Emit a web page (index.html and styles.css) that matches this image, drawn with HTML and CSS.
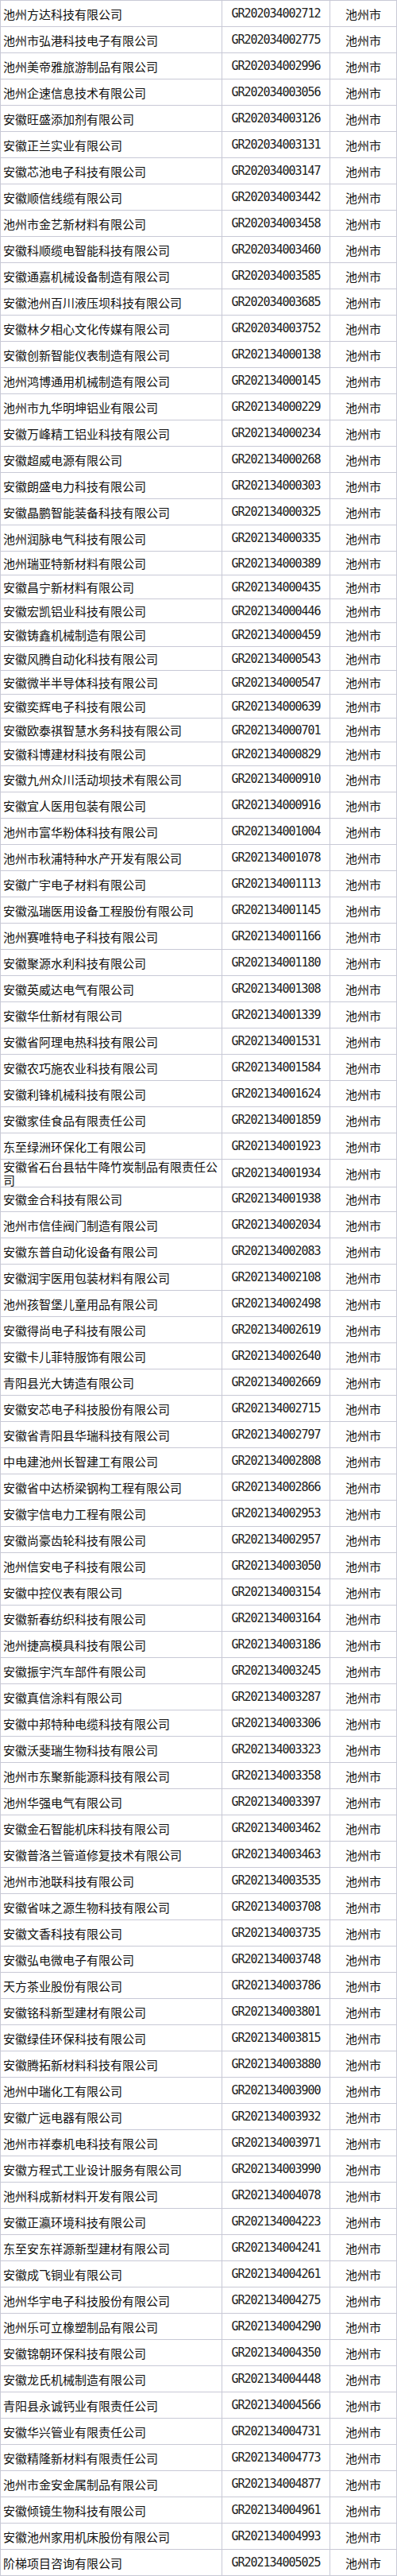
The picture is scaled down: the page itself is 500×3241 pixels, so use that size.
FILE: index.html
```html
<!DOCTYPE html>
<html lang="zh-CN">
<head>
<meta charset="utf-8">
<title>池州市高新技术企业名单</title>
<link rel="stylesheet" href="styles.css">
</head>
<body>
<div class="sheet">
<div class="row"><div class="cell name">池州方达科技有限公司</div><div class="cell code">GR202034002712</div><div class="cell city">池州市</div></div>
<div class="row"><div class="cell name">池州市弘港科技电子有限公司</div><div class="cell code">GR202034002775</div><div class="cell city">池州市</div></div>
<div class="row"><div class="cell name">池州美帝雅旅游制品有限公司</div><div class="cell code">GR202034002996</div><div class="cell city">池州市</div></div>
<div class="row"><div class="cell name">池州企速信息技术有限公司</div><div class="cell code">GR202034003056</div><div class="cell city">池州市</div></div>
<div class="row"><div class="cell name">安徽旺盛添加剂有限公司</div><div class="cell code">GR202034003126</div><div class="cell city">池州市</div></div>
<div class="row"><div class="cell name">安徽正兰实业有限公司</div><div class="cell code">GR202034003131</div><div class="cell city">池州市</div></div>
<div class="row"><div class="cell name">安徽芯池电子科技有限公司</div><div class="cell code">GR202034003147</div><div class="cell city">池州市</div></div>
<div class="row"><div class="cell name">安徽顺信线缆有限公司</div><div class="cell code">GR202034003442</div><div class="cell city">池州市</div></div>
<div class="row"><div class="cell name">池州市金艺新材料有限公司</div><div class="cell code">GR202034003458</div><div class="cell city">池州市</div></div>
<div class="row"><div class="cell name">安徽科顺缆电智能科技有限公司</div><div class="cell code">GR202034003460</div><div class="cell city">池州市</div></div>
<div class="row"><div class="cell name">安徽通嘉机械设备制造有限公司</div><div class="cell code">GR202034003585</div><div class="cell city">池州市</div></div>
<div class="row"><div class="cell name">安徽池州百川液压坝科技有限公司</div><div class="cell code">GR202034003685</div><div class="cell city">池州市</div></div>
<div class="row"><div class="cell name">安徽林夕相心文化传媒有限公司</div><div class="cell code">GR202034003752</div><div class="cell city">池州市</div></div>
<div class="row"><div class="cell name">安徽创新智能仪表制造有限公司</div><div class="cell code">GR202134000138</div><div class="cell city">池州市</div></div>
<div class="row"><div class="cell name">池州鸿博通用机械制造有限公司</div><div class="cell code">GR202134000145</div><div class="cell city">池州市</div></div>
<div class="row"><div class="cell name">池州市九华明坤铝业有限公司</div><div class="cell code">GR202134000229</div><div class="cell city">池州市</div></div>
<div class="row"><div class="cell name">安徽万峰精工铝业科技有限公司</div><div class="cell code">GR202134000234</div><div class="cell city">池州市</div></div>
<div class="row"><div class="cell name">安徽超威电源有限公司</div><div class="cell code">GR202134000268</div><div class="cell city">池州市</div></div>
<div class="row"><div class="cell name">安徽朗盛电力科技有限公司</div><div class="cell code">GR202134000303</div><div class="cell city">池州市</div></div>
<div class="row"><div class="cell name">安徽晶鹏智能装备科技有限公司</div><div class="cell code">GR202134000325</div><div class="cell city">池州市</div></div>
<div class="row"><div class="cell name">池州润脉电气科技有限公司</div><div class="cell code">GR202134000335</div><div class="cell city">池州市</div></div>
<div class="row short"><div class="cell name">池州瑞亚特新材料有限公司</div><div class="cell code">GR202134000389</div><div class="cell city">池州市</div></div>
<div class="row short"><div class="cell name">安徽昌宁新材料有限公司</div><div class="cell code">GR202134000435</div><div class="cell city">池州市</div></div>
<div class="row short"><div class="cell name">安徽宏凯铝业科技有限公司</div><div class="cell code">GR202134000446</div><div class="cell city">池州市</div></div>
<div class="row short"><div class="cell name">安徽铸鑫机械制造有限公司</div><div class="cell code">GR202134000459</div><div class="cell city">池州市</div></div>
<div class="row short"><div class="cell name">安徽风腾自动化科技有限公司</div><div class="cell code">GR202134000543</div><div class="cell city">池州市</div></div>
<div class="row short"><div class="cell name">安徽微半半导体科技有限公司</div><div class="cell code">GR202134000547</div><div class="cell city">池州市</div></div>
<div class="row short"><div class="cell name">安徽奕辉电子科技有限公司</div><div class="cell code">GR202134000639</div><div class="cell city">池州市</div></div>
<div class="row short"><div class="cell name">安徽欧泰祺智慧水务科技有限公司</div><div class="cell code">GR202134000701</div><div class="cell city">池州市</div></div>
<div class="row short"><div class="cell name">安徽科博建材科技有限公司</div><div class="cell code">GR202134000829</div><div class="cell city">池州市</div></div>
<div class="row"><div class="cell name">安徽九州众川活动坝技术有限公司</div><div class="cell code">GR202134000910</div><div class="cell city">池州市</div></div>
<div class="row"><div class="cell name">安徽宜人医用包装有限公司</div><div class="cell code">GR202134000916</div><div class="cell city">池州市</div></div>
<div class="row"><div class="cell name">池州市富华粉体科技有限公司</div><div class="cell code">GR202134001004</div><div class="cell city">池州市</div></div>
<div class="row"><div class="cell name">池州市秋浦特种水产开发有限公司</div><div class="cell code">GR202134001078</div><div class="cell city">池州市</div></div>
<div class="row"><div class="cell name">安徽广宇电子材料有限公司</div><div class="cell code">GR202134001113</div><div class="cell city">池州市</div></div>
<div class="row"><div class="cell name">安徽泓瑞医用设备工程股份有限公司</div><div class="cell code">GR202134001145</div><div class="cell city">池州市</div></div>
<div class="row"><div class="cell name">池州赛唯特电子科技有限公司</div><div class="cell code">GR202134001166</div><div class="cell city">池州市</div></div>
<div class="row"><div class="cell name">安徽聚源水利科技有限公司</div><div class="cell code">GR202134001180</div><div class="cell city">池州市</div></div>
<div class="row"><div class="cell name">安徽英威达电气有限公司</div><div class="cell code">GR202134001308</div><div class="cell city">池州市</div></div>
<div class="row"><div class="cell name">安徽华仕新材有限公司</div><div class="cell code">GR202134001339</div><div class="cell city">池州市</div></div>
<div class="row"><div class="cell name">安徽省阿理电热科技有限公司</div><div class="cell code">GR202134001531</div><div class="cell city">池州市</div></div>
<div class="row"><div class="cell name">安徽农巧施农业科技有限公司</div><div class="cell code">GR202134001584</div><div class="cell city">池州市</div></div>
<div class="row"><div class="cell name">安徽利锋机械科技有限公司</div><div class="cell code">GR202134001624</div><div class="cell city">池州市</div></div>
<div class="row"><div class="cell name">安徽家佳食品有限责任公司</div><div class="cell code">GR202134001859</div><div class="cell city">池州市</div></div>
<div class="row"><div class="cell name">东至绿洲环保化工有限公司</div><div class="cell code">GR202134001923</div><div class="cell city">池州市</div></div>
<div class="row"><div class="cell name">安徽省石台县牯牛降竹炭制品有限责任公司</div><div class="cell code">GR202134001934</div><div class="cell city">池州市</div></div>
<div class="row"><div class="cell name">安徽金合科技有限公司</div><div class="cell code">GR202134001938</div><div class="cell city">池州市</div></div>
<div class="row"><div class="cell name">池州市信佳阀门制造有限公司</div><div class="cell code">GR202134002034</div><div class="cell city">池州市</div></div>
<div class="row"><div class="cell name">安徽东普自动化设备有限公司</div><div class="cell code">GR202134002083</div><div class="cell city">池州市</div></div>
<div class="row"><div class="cell name">安徽润宇医用包装材料有限公司</div><div class="cell code">GR202134002108</div><div class="cell city">池州市</div></div>
<div class="row"><div class="cell name">池州孩智堡儿童用品有限公司</div><div class="cell code">GR202134002498</div><div class="cell city">池州市</div></div>
<div class="row"><div class="cell name">安徽得尚电子科技有限公司</div><div class="cell code">GR202134002619</div><div class="cell city">池州市</div></div>
<div class="row"><div class="cell name">安徽卡儿菲特服饰有限公司</div><div class="cell code">GR202134002640</div><div class="cell city">池州市</div></div>
<div class="row"><div class="cell name">青阳县光大铸造有限公司</div><div class="cell code">GR202134002669</div><div class="cell city">池州市</div></div>
<div class="row"><div class="cell name">安徽安芯电子科技股份有限公司</div><div class="cell code">GR202134002715</div><div class="cell city">池州市</div></div>
<div class="row"><div class="cell name">安徽省青阳县华瑞科技有限公司</div><div class="cell code">GR202134002797</div><div class="cell city">池州市</div></div>
<div class="row"><div class="cell name">中电建池州长智建工有限公司</div><div class="cell code">GR202134002808</div><div class="cell city">池州市</div></div>
<div class="row"><div class="cell name">安徽省中达桥梁钢构工程有限公司</div><div class="cell code">GR202134002866</div><div class="cell city">池州市</div></div>
<div class="row"><div class="cell name">安徽宇信电力工程有限公司</div><div class="cell code">GR202134002953</div><div class="cell city">池州市</div></div>
<div class="row"><div class="cell name">安徽尚豪齿轮科技有限公司</div><div class="cell code">GR202134002957</div><div class="cell city">池州市</div></div>
<div class="row"><div class="cell name">池州信安电子科技有限公司</div><div class="cell code">GR202134003050</div><div class="cell city">池州市</div></div>
<div class="row"><div class="cell name">安徽中控仪表有限公司</div><div class="cell code">GR202134003154</div><div class="cell city">池州市</div></div>
<div class="row"><div class="cell name">安徽新春纺织科技有限公司</div><div class="cell code">GR202134003164</div><div class="cell city">池州市</div></div>
<div class="row"><div class="cell name">池州捷高模具科技有限公司</div><div class="cell code">GR202134003186</div><div class="cell city">池州市</div></div>
<div class="row"><div class="cell name">安徽振宇汽车部件有限公司</div><div class="cell code">GR202134003245</div><div class="cell city">池州市</div></div>
<div class="row"><div class="cell name">安徽真信涂料有限公司</div><div class="cell code">GR202134003287</div><div class="cell city">池州市</div></div>
<div class="row"><div class="cell name">安徽中邦特种电缆科技有限公司</div><div class="cell code">GR202134003306</div><div class="cell city">池州市</div></div>
<div class="row"><div class="cell name">安徽沃斐瑞生物科技有限公司</div><div class="cell code">GR202134003323</div><div class="cell city">池州市</div></div>
<div class="row"><div class="cell name">池州市东聚新能源科技有限公司</div><div class="cell code">GR202134003358</div><div class="cell city">池州市</div></div>
<div class="row"><div class="cell name">池州华强电气有限公司</div><div class="cell code">GR202134003397</div><div class="cell city">池州市</div></div>
<div class="row"><div class="cell name">安徽金石智能机床科技有限公司</div><div class="cell code">GR202134003462</div><div class="cell city">池州市</div></div>
<div class="row"><div class="cell name">安徽普洛兰管道修复技术有限公司</div><div class="cell code">GR202134003463</div><div class="cell city">池州市</div></div>
<div class="row"><div class="cell name">池州市池联科技有限公司</div><div class="cell code">GR202134003535</div><div class="cell city">池州市</div></div>
<div class="row"><div class="cell name">安徽省味之源生物科技有限公司</div><div class="cell code">GR202134003708</div><div class="cell city">池州市</div></div>
<div class="row"><div class="cell name">安徽文香科技有限公司</div><div class="cell code">GR202134003735</div><div class="cell city">池州市</div></div>
<div class="row"><div class="cell name">安徽弘电微电子有限公司</div><div class="cell code">GR202134003748</div><div class="cell city">池州市</div></div>
<div class="row"><div class="cell name">天方茶业股份有限公司</div><div class="cell code">GR202134003786</div><div class="cell city">池州市</div></div>
<div class="row"><div class="cell name">安徽铭科新型建材有限公司</div><div class="cell code">GR202134003801</div><div class="cell city">池州市</div></div>
<div class="row"><div class="cell name">安徽绿佳环保科技有限公司</div><div class="cell code">GR202134003815</div><div class="cell city">池州市</div></div>
<div class="row"><div class="cell name">安徽腾拓新材料科技有限公司</div><div class="cell code">GR202134003880</div><div class="cell city">池州市</div></div>
<div class="row"><div class="cell name">池州中瑞化工有限公司</div><div class="cell code">GR202134003900</div><div class="cell city">池州市</div></div>
<div class="row"><div class="cell name">安徽广远电器有限公司</div><div class="cell code">GR202134003932</div><div class="cell city">池州市</div></div>
<div class="row"><div class="cell name">池州市祥泰机电科技有限公司</div><div class="cell code">GR202134003971</div><div class="cell city">池州市</div></div>
<div class="row"><div class="cell name">安徽方程式工业设计服务有限公司</div><div class="cell code">GR202134003990</div><div class="cell city">池州市</div></div>
<div class="row"><div class="cell name">池州科成新材料开发有限公司</div><div class="cell code">GR202134004078</div><div class="cell city">池州市</div></div>
<div class="row"><div class="cell name">安徽正瀛环境科技有限公司</div><div class="cell code">GR202134004223</div><div class="cell city">池州市</div></div>
<div class="row"><div class="cell name">东至安东祥源新型建材有限公司</div><div class="cell code">GR202134004241</div><div class="cell city">池州市</div></div>
<div class="row"><div class="cell name">安徽成飞铜业有限公司</div><div class="cell code">GR202134004261</div><div class="cell city">池州市</div></div>
<div class="row"><div class="cell name">池州华宇电子科技股份有限公司</div><div class="cell code">GR202134004275</div><div class="cell city">池州市</div></div>
<div class="row"><div class="cell name">池州乐可立橡塑制品有限公司</div><div class="cell code">GR202134004290</div><div class="cell city">池州市</div></div>
<div class="row"><div class="cell name">安徽锦朝环保科技有限公司</div><div class="cell code">GR202134004350</div><div class="cell city">池州市</div></div>
<div class="row"><div class="cell name">安徽龙氏机械制造有限公司</div><div class="cell code">GR202134004448</div><div class="cell city">池州市</div></div>
<div class="row"><div class="cell name">青阳县永诚钙业有限责任公司</div><div class="cell code">GR202134004566</div><div class="cell city">池州市</div></div>
<div class="row"><div class="cell name">安徽华兴管业有限责任公司</div><div class="cell code">GR202134004731</div><div class="cell city">池州市</div></div>
<div class="row"><div class="cell name">安徽精隆新材料有限责任公司</div><div class="cell code">GR202134004773</div><div class="cell city">池州市</div></div>
<div class="row"><div class="cell name">池州市金安金属制品有限公司</div><div class="cell code">GR202134004877</div><div class="cell city">池州市</div></div>
<div class="row"><div class="cell name">安徽倾镜生物科技有限公司</div><div class="cell code">GR202134004961</div><div class="cell city">池州市</div></div>
<div class="row"><div class="cell name">安徽池州家用机床股份有限公司</div><div class="cell code">GR202134004993</div><div class="cell city">池州市</div></div>
<div class="row"><div class="cell name">阶梯项目咨询有限公司</div><div class="cell code">GR202134005025</div><div class="cell city">池州市</div></div>
</div>
</body>
</html>
```

FILE: styles.css
```css
html, body {
  margin: 0;
  padding: 0;
  background: #ffffff;
}

.sheet {
  width: 500px;
  box-sizing: border-box;
  border-left: 1px solid #c8c9d6;
  border-top: 1px solid #c8c9d6;
  font-family: "Noto Sans CJK SC", "Noto Sans", sans-serif;
  color: #111111;
}

.row {
  display: grid;
  grid-template-columns: 279px 136px 84px;
  height: 33px;
}

.row.short {
  height: 30px;
}

.cell {
  box-sizing: border-box;
  border-right: 1px solid #c8c9d6;
  border-bottom: 1px solid #c8c9d6;
  display: flex;
  align-items: center;
  overflow: visible;
  min-width: 0;
}

.name {
  padding-left: 3px;
  padding-right: 2px;
  font-size: 15px;
  line-height: 17px;
}

.code {
  justify-content: center;
  font-family: "DejaVu Sans Mono", "Liberation Mono", monospace;
  font-size: 15px;
  letter-spacing: -1.03px;
  color: #222222;
}

.city {
  justify-content: center;
  font-size: 15px;
}
```
